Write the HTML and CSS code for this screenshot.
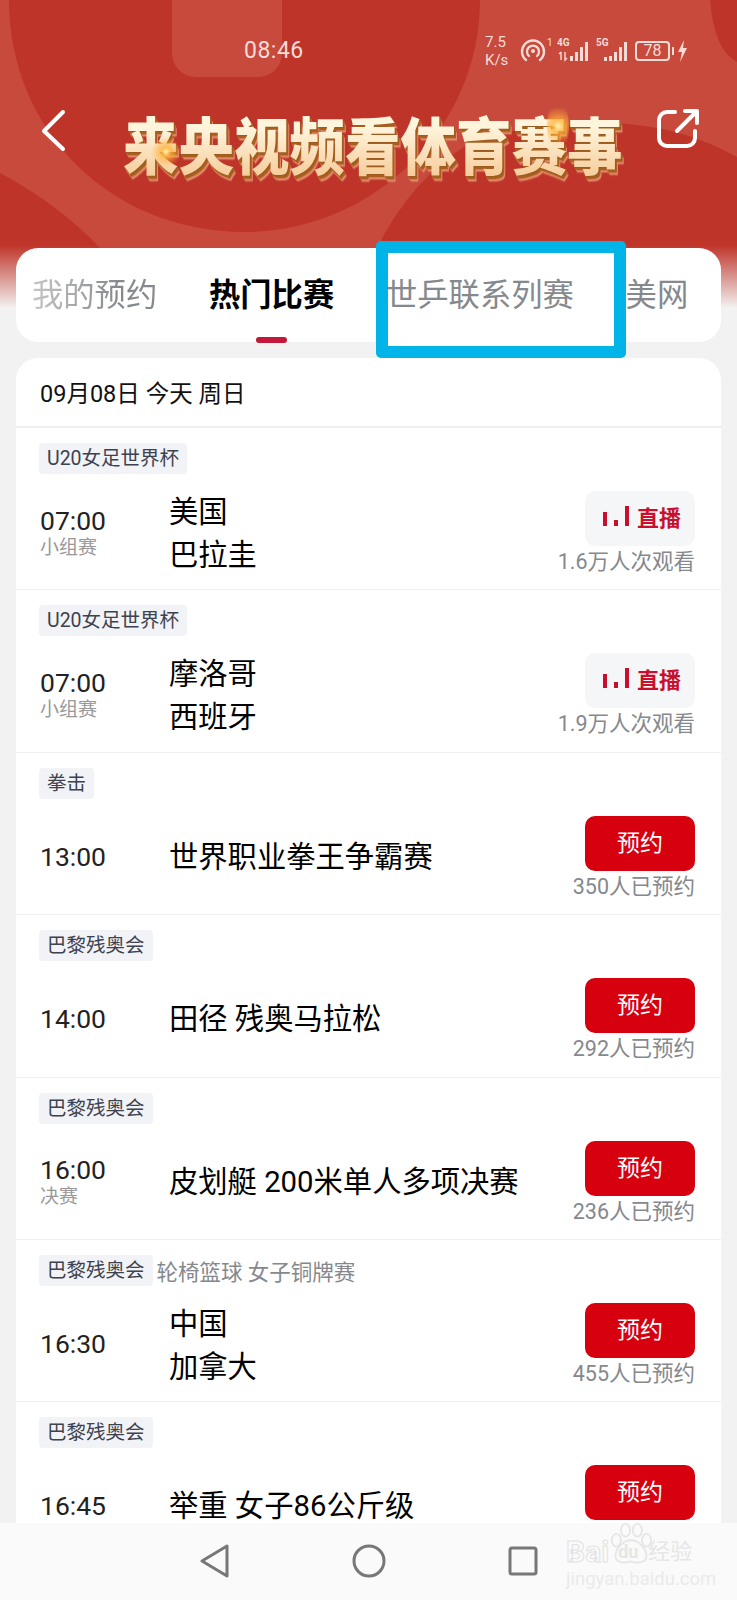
FILE: index.html
```html
<!DOCTYPE html>
<html lang="zh-CN">
<head>
    <meta charset="UTF-8">
    <meta name="viewport" content="width=device-width, initial-scale=1.0">
    <title>来央视频看体育赛事</title>
    <link rel="stylesheet" href="styles.css">
</head>
<body>
    <div class="page">
        <div class="hero">
            <!-- background shapes behind the header -->
            <svg class="hero-bg" width="737" height="250" viewBox="0 0 737 250">
                <path d="M0 0H710Q714 50 737 62V157Q680 125 611 123Q510 125 470 143Q410 180 376 250H102Q60 205 0 173Z" fill="#c84a3d"/>
                <path d="M9 0C9 130 110 232 245 232C370 232 480 130 480 0Z" fill="#bf3429"/>
                <rect x="172" y="-30" width="110" height="107" rx="24" fill="#c84a3d"/>
            </svg>

            <div class="status-bar">
                <span class="clock">08:46</span>
                <div class="status-icons">
                    <span class="speed">7.5<br>K/s</span>
                    <svg class="hotspot" width="26" height="24" viewBox="0 0 26 24">
                        <path d="M6 21A11 11 0 1 1 20 21" fill="none" stroke="#f6dcd6" stroke-width="2.4" stroke-linecap="round"/>
                        <path d="M9 17A6 6 0 1 1 17 17" fill="none" stroke="#f6dcd6" stroke-width="2.2" stroke-linecap="round"/>
                        <circle cx="13" cy="12" r="2" fill="#f6dcd6"/>
                    </svg>
                    <span class="sim-no">1</span>
                    <div class="signal signal-4g">
                        <span class="net">4G</span>
                        <svg width="32" height="20" viewBox="0 0 32 20">
                            <path d="M3 10V18M1 12L3 10M7 10V18L9 16" fill="none" stroke="#f6dcd6" stroke-width="1.4"/>
                            <rect x="12" y="14" width="3" height="5" fill="#f6dcd6"/>
                            <rect x="17" y="10" width="3" height="9" fill="#f6dcd6"/>
                            <rect x="22" y="5" width="3" height="14" fill="#f6dcd6"/>
                            <rect x="27" y="0" width="3" height="19" fill="#f6dcd6"/>
                        </svg>
                    </div>
                    <div class="signal signal-5g">
                        <span class="net">5G</span>
                        <svg width="32" height="20" viewBox="0 0 32 20">
                            <rect x="7" y="15" width="3" height="4" fill="#f6dcd6"/>
                            <rect x="12" y="14" width="3" height="5" fill="#f6dcd6"/>
                            <rect x="17" y="10" width="3" height="9" fill="#f6dcd6"/>
                            <rect x="22" y="5" width="3" height="14" fill="#f6dcd6"/>
                            <rect x="27" y="0" width="3" height="19" fill="#f6dcd6"/>
                        </svg>
                    </div>
                    <span class="battery">78</span>
                    <span class="battery-nub"></span>
                    <svg class="bolt" width="9" height="22" viewBox="0 0 9 22">
                        <path d="M6 0L0 12H4L2 22L9 8H5Z" fill="#f6dcd6"/>
                    </svg>
                </div>
            </div>

            <div class="title-bar">
                <svg class="back" width="30" height="44" viewBox="0 0 30 44">
                    <path d="M24 3L5 22L24 40" fill="none" stroke="#fff" stroke-width="4" stroke-linecap="round" stroke-linejoin="round"/>
                </svg>
                <div class="title-wrap">
                    <h1 class="title">来央视频看体育赛事</h1>
                    <span class="spark spark-left"></span>
                    <span class="spark spark-right"></span>
                </div>
                <svg class="share" width="44" height="44" viewBox="0 0 44 44">
                    <path d="M19 5H11A8 8 0 0 0 3 13V31A8 8 0 0 0 11 39H31A8 8 0 0 0 39 31V24" fill="none" stroke="#fff" stroke-width="4" stroke-linecap="round"/>
                    <path d="M21 24L41 4M29 4H41V16" fill="none" stroke="#fff" stroke-width="4" stroke-linecap="round" stroke-linejoin="round"/>
                </svg>
            </div>

            <div class="tabs">
                <span class="tab tab-fade">我的预约</span>
                <span class="tab tab-active">热门比赛</span>
                <span class="tab tab-boxed">世乒联系列赛</span>
                <span class="tab">美网</span>
                <div class="highlight-box"></div>
            </div>
        </div>

        <div class="list">
            <div class="list-head">09月08日 今天 周日</div>

            <div class="row">
                <div class="tag-line"><span class="tag">U20女足世界杯</span></div>
                <div class="main">
                    <div class="when"><div class="time">07:00</div><div class="stage">小组赛</div></div>
                    <div class="teams"><div>美国</div><div>巴拉圭</div></div>
                    <div class="action">
                        <div class="btn btn-live">
                            <svg width="27" height="20" viewBox="0 0 27 20">
                                <rect x="0" y="6" width="4" height="14" fill="#c8102e"/>
                                <rect x="11" y="14" width="4" height="6" fill="#c8102e"/>
                                <rect x="22" y="0" width="4" height="20" fill="#c8102e"/>
                            </svg>
                            直播
                        </div>
                        <div class="note">1.6万人次观看</div>
                    </div>
                </div>
            </div>

            <div class="row">
                <div class="tag-line"><span class="tag">U20女足世界杯</span></div>
                <div class="main">
                    <div class="when"><div class="time">07:00</div><div class="stage">小组赛</div></div>
                    <div class="teams"><div>摩洛哥</div><div>西班牙</div></div>
                    <div class="action">
                        <div class="btn btn-live">
                            <svg width="27" height="20" viewBox="0 0 27 20">
                                <rect x="0" y="6" width="4" height="14" fill="#c8102e"/>
                                <rect x="11" y="14" width="4" height="6" fill="#c8102e"/>
                                <rect x="22" y="0" width="4" height="20" fill="#c8102e"/>
                            </svg>
                            直播
                        </div>
                        <div class="note">1.9万人次观看</div>
                    </div>
                </div>
            </div>

            <div class="row">
                <div class="tag-line"><span class="tag">拳击</span></div>
                <div class="main">
                    <div class="when"><div class="time">13:00</div></div>
                    <div class="teams"><div>世界职业拳王争霸赛</div></div>
                    <div class="action">
                        <div class="btn btn-book">预约</div>
                        <div class="note">350人已预约</div>
                    </div>
                </div>
            </div>

            <div class="row">
                <div class="tag-line"><span class="tag">巴黎残奥会</span></div>
                <div class="main">
                    <div class="when"><div class="time">14:00</div></div>
                    <div class="teams"><div>田径 残奥马拉松</div></div>
                    <div class="action">
                        <div class="btn btn-book">预约</div>
                        <div class="note">292人已预约</div>
                    </div>
                </div>
            </div>

            <div class="row">
                <div class="tag-line"><span class="tag">巴黎残奥会</span></div>
                <div class="main">
                    <div class="when"><div class="time">16:00</div><div class="stage">决赛</div></div>
                    <div class="teams"><div>皮划艇 200米单人多项决赛</div></div>
                    <div class="action">
                        <div class="btn btn-book">预约</div>
                        <div class="note">236人已预约</div>
                    </div>
                </div>
            </div>

            <div class="row">
                <div class="tag-line"><span class="tag">巴黎残奥会</span><span class="tag-note">轮椅篮球 女子铜牌赛</span></div>
                <div class="main">
                    <div class="when"><div class="time">16:30</div></div>
                    <div class="teams"><div>中国</div><div>加拿大</div></div>
                    <div class="action">
                        <div class="btn btn-book">预约</div>
                        <div class="note">455人已预约</div>
                    </div>
                </div>
            </div>

            <div class="row">
                <div class="tag-line"><span class="tag">巴黎残奥会</span></div>
                <div class="main">
                    <div class="when"><div class="time">16:45</div></div>
                    <div class="teams"><div>举重 女子86公斤级</div></div>
                    <div class="action">
                        <div class="btn btn-book">预约</div>
                        <div class="note">&nbsp;</div>
                    </div>
                </div>
            </div>
        </div>

        <div class="nav-bar">
            <svg width="30" height="34" viewBox="0 0 30 34">
                <path d="M27 2V32L2 17Z" fill="none" stroke="#777" stroke-width="3" stroke-linejoin="round"/>
            </svg>
            <svg width="34" height="34" viewBox="0 0 34 34">
                <circle cx="17" cy="17" r="15" fill="none" stroke="#777" stroke-width="3"/>
            </svg>
            <svg width="30" height="30" viewBox="0 0 30 30">
                <rect x="2" y="2" width="26" height="26" rx="2" fill="none" stroke="#777" stroke-width="3"/>
            </svg>

            <!-- baidu watermark over the nav bar -->
            <div class="watermark">
                <svg class="paw" width="42" height="42" viewBox="0 0 46 46">
                    <g fill="none" stroke="#e6e6e6" stroke-width="2">
                        <ellipse cx="7" cy="20" rx="5" ry="7"/>
                        <ellipse cx="17" cy="9" rx="5" ry="7"/>
                        <ellipse cx="30" cy="9" rx="5" ry="7"/>
                        <ellipse cx="40" cy="20" rx="5" ry="7"/>
                        <path d="M23 20C14 20 6 30 6 37C6 44 14 46 23 43C32 46 40 44 40 37C40 30 32 20 23 20Z"/>
                    </g>
                </svg>
                <div class="wm-line"><span class="wm-bai">Bai</span><span class="wm-du">du</span><span class="wm-cn">经验</span></div>
                <div class="wm-url">jingyan.baidu.com</div>
            </div>
        </div>
    </div>
</body>
</html>
```
FILE: styles.css
```css
* {
    box-sizing: border-box;
}
body {
    margin: 0;
    font-family: Roboto, "Noto Sans CJK SC", sans-serif;
    background-color: #f2f2f2;
}
.page {
    width: 737px;
    height: 1600px;
    display: flex;
    flex-direction: column;
    overflow: hidden;
    position: relative;
}

/* header */
.hero {
    position: relative;
    height: 358px;
    flex-shrink: 0;
    background: linear-gradient(#bf3429 0, #bf3429 245px, #f2f2f2 308px);
}
.hero-bg {
    position: absolute;
    top: 0;
    left: 0;
}
.status-bar {
    position: relative;
    height: 104px;
    color: #f6dcd6;
}
.clock {
    position: absolute;
    top: 37px;
    left: 244px;
    font-size: 23px;
    line-height: 28px;
    letter-spacing: 0.5px;
}
.status-icons {
    position: absolute;
    top: 34px;
    left: 485px;
    display: flex;
    align-items: center;
    height: 34px;
}
.speed {
    width: 35px;
    font-size: 15px;
    line-height: 18px;
    text-align: left;
}
.sim-no {
    font-size: 10px;
    align-self: flex-start;
    margin: 3px 0 0 1px;
    width: 9px;
}
.signal {
    position: relative;
    width: 33px;
    height: 22px;
    margin-left: 1px;
}
.signal svg {
    position: absolute;
    left: 1px;
    bottom: 0;
}
.net {
    position: absolute;
    top: -3px;
    left: 0;
    font-size: 10px;
    line-height: 12px;
    font-weight: 700;
}
.signal-5g {
    margin-left: 6px;
}
.battery {
    width: 35px;
    height: 20px;
    margin-left: 6px;
    border: 2px solid #f6dcd6;
    border-radius: 4px;
    font-size: 16px;
    line-height: 16px;
    text-align: center;
}
.battery-nub {
    width: 2px;
    height: 8px;
    margin-left: 2px;
    background-color: #f6dcd6;
}
.bolt {
    margin-left: 4px;
}
.title-bar {
    position: relative;
    height: 144px;
    display: flex;
    align-items: flex-start;
}
.back {
    margin: 5px 0 0 39px;
}
.title-wrap {
    position: relative;
    width: 500px;
    margin: 13px 0 0 54px;
}
.title {
    margin: 0;
    font-size: 55.5px;
    line-height: 66px;
    font-weight: 900;
    white-space: nowrap;
    background: linear-gradient(#fff4dc 20%, #f6cd9c 85%);
    -webkit-background-clip: text;
    background-clip: text;
    color: transparent;
    transform: scaleY(1.12);
    filter: drop-shadow(1px 1px 0 #9e5a1c) drop-shadow(1px 2px 0 #a9601f) drop-shadow(1px 2px 0 #e58a6e);
}
.spark {
    position: absolute;
    border-radius: 50%;
    background: radial-gradient(circle, #fff2b0 0, rgba(255, 178, 58, 0.8) 22%, rgba(255, 150, 30, 0) 70%);
}
.spark-left {
    top: 20px;
    left: 28px;
    width: 30px;
    height: 30px;
}
.spark-right {
    top: -16px;
    left: 424px;
    width: 22px;
    height: 50px;
}
.share {
    margin: 3px 0 0 33px;
}

/* tabs */
.tabs {
    position: relative;
    height: 94px;
    margin: 0 16px;
    padding: 27px 0 0 16px;
    display: flex;
    gap: 51.8px;
    background: #fff;
    border-radius: 22px;
}
.tab {
    position: relative;
    font-size: 31.3px;
    line-height: 42px;
    color: #85888d;
    white-space: nowrap;
}
.tab-fade {
    background: linear-gradient(90deg, #c6c6c6, #85888d 70%);
    -webkit-background-clip: text;
    background-clip: text;
    color: transparent;
}
.tab-active {
    color: #000;
    font-weight: 700;
}
.tab-active::after {
    content: "";
    position: absolute;
    left: 47px;
    top: 62px;
    width: 31px;
    height: 6px;
    border-radius: 3px;
    background-color: #c3183a;
}
.tab-boxed {
    z-index: 2;
}
.highlight-box {
    position: absolute;
    top: -7px;
    left: 360px;
    width: 250px;
    height: 117px;
    background: #fff;
    border: 12px solid #00b4e8;
    border-radius: 5px;
}

/* list */
.list {
    flex: 1;
    min-height: 0;
    margin: 0 16px;
    background: #fff;
    border-radius: 22px 22px 0 0;
    overflow: hidden;
}
.list-head {
    height: 70px;
    padding: 21px 0 0 24px;
    font-size: 23.5px;
    line-height: 30px;
    color: #111;
    border-bottom: 2px solid #eee;
}
.row {
    height: 162.4px;
    padding-top: 15px;
    border-bottom: 1px solid #f0f0f0;
}
.tag-line {
    display: flex;
    height: 31px;
    padding-left: 23px;
    align-items: center;
}
.tag {
    height: 31px;
    padding: 0 8px;
    font-size: 19.5px;
    line-height: 31px;
    color: #3d424e;
    background-color: #f1f3f7;
    border-radius: 4px;
}
.tag-note {
    margin-left: 4px;
    font-size: 21.5px;
    color: #85888d;
}
.main {
    display: flex;
    align-items: center;
    height: 86px;
    margin-top: 17px;
    padding: 0 26px 0 24px;
}
.when {
    width: 129px;
}
.time {
    font-size: 26.5px;
    line-height: 26px;
    color: #222;
}
.time:only-child {
    margin-bottom: 4px;
}
.stage {
    font-size: 19px;
    line-height: 27px;
    color: #999;
}
.teams {
    flex: 1;
    font-size: 29.3px;
    line-height: 43px;
    color: #000;
}
.teams div:only-child {
    margin-bottom: 3px;
}
.action {
    display: flex;
    flex-direction: column;
    align-items: flex-end;
}
.btn {
    width: 110px;
    height: 55px;
    padding-bottom: 5px;
    display: flex;
    align-items: center;
    justify-content: center;
    border-radius: 10px;
    font-size: 23px;
}
.btn-live {
    gap: 7px;
    padding-left: 4px;
    font-size: 22px;
    font-weight: 700;
    color: #c8102e;
    background-color: #f5f6f8;
}
.btn-book {
    color: #fff;
    background-color: #d7000f;
}
.note {
    margin-top: 1px;
    font-size: 21.5px;
    line-height: 30px;
    color: #85888d;
    white-space: nowrap;
}

/* nav bar */
.nav-bar {
    position: relative;
    height: 77px;
    flex-shrink: 0;
    display: flex;
    align-items: center;
    padding: 0 0 2px 200px;
    gap: 122px;
    background-color: #fafafa;
}
.watermark {
    position: absolute;
    top: 0;
    left: 566px;
    width: 135px;
    color: #e6e6e6;
}
.paw {
    position: absolute;
    top: -1px;
    left: 44px;
}
.wm-line {
    position: relative;
    display: flex;
    align-items: center;
    height: 22px;
    margin-top: 18px;
    font-size: 30px;
    line-height: 22px;
    font-weight: 700;
}
.wm-bai {
    color: #fafafa;
    -webkit-text-stroke: 1px #e2e2e2;
}
.wm-du {
    margin-left: 9px;
    font-size: 18px;
    width: 30px;
}
.wm-cn {
    font-size: 22px;
    font-weight: 400;
}
.wm-url {
    margin-top: 6px;
    font-size: 18.5px;
    line-height: 20px;
    white-space: nowrap;
    color: #eaeaea;
}
```
